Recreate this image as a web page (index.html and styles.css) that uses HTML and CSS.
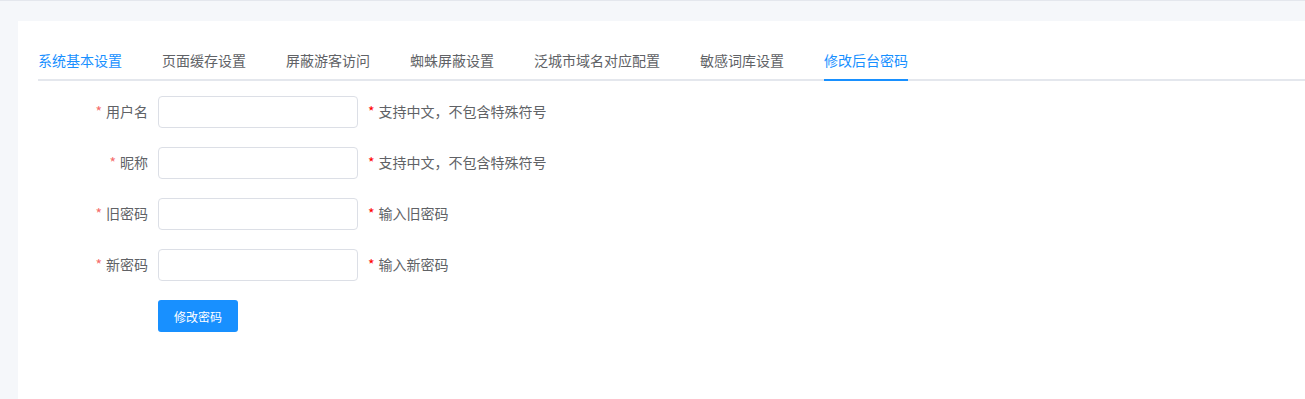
FILE: index.html
```html
<!DOCTYPE html>
<html lang="zh-CN">
<head>
    <meta charset="UTF-8">
    <meta name="viewport" content="width=device-width, initial-scale=1.0">
    <title>修改后台密码</title>
    <link rel="stylesheet" href="styles.css">
</head>
<body>

<div class="page">
    <div class="card">
        <div class="tabs">
            <div class="tab-item hover">系统基本设置</div>
            <div class="tab-item">页面缓存设置</div>
            <div class="tab-item">屏蔽游客访问</div>
            <div class="tab-item">蜘蛛屏蔽设置</div>
            <div class="tab-item">泛城市域名对应配置</div>
            <div class="tab-item">敏感词库设置</div>
            <div class="tab-item active">修改后台密码</div>
        </div>

        <form class="pwd-form">
            <div class="form-row">
                <label class="form-label"><span class="req">*</span>用户名</label>
                <input class="form-input" type="text">
                <span class="form-tip"><span class="tip-req">*</span>支持中文，不包含特殊符号</span>
            </div>
            <div class="form-row">
                <label class="form-label"><span class="req">*</span>昵称</label>
                <input class="form-input" type="text">
                <span class="form-tip"><span class="tip-req">*</span>支持中文，不包含特殊符号</span>
            </div>
            <div class="form-row">
                <label class="form-label"><span class="req">*</span>旧密码</label>
                <input class="form-input" type="password">
                <span class="form-tip"><span class="tip-req">*</span>输入旧密码</span>
            </div>
            <div class="form-row">
                <label class="form-label"><span class="req">*</span>新密码</label>
                <input class="form-input" type="password">
                <span class="form-tip"><span class="tip-req">*</span>输入新密码</span>
            </div>
            <div class="form-row">
                <button class="submit-button" type="button">修改密码</button>
            </div>
        </form>
    </div>
</div>

</body>
</html>
```

FILE: styles.css
```css
body {
    margin: 0;
    padding: 0;
    font-family: "Noto Sans CJK SC", "Liberation Sans", sans-serif;
    background-color: #f5f7fa;
    color: #606266;
    border-top: 1px solid #e4e7ed;
}
.page {
    padding: 20px 0 0 18px;
}
.card {
    background-color: #fff;
    padding: 20px 0 0 20px;
    min-height: calc(100vh - 41px);
}
.tabs {
    display: flex;
    border-bottom: 2px solid #e4e7ed;
}
.tab-item {
    font-size: 14px;
    line-height: 38px;
    margin-right: 40px;
    margin-bottom: -2px;
    border-bottom: 2px solid transparent;
    color: #606266;
    cursor: pointer;
}
.tab-item.hover {
    color: #1890ff;
}
.tab-item.active {
    color: #1890ff;
    border-bottom-color: #1890ff;
}
.pwd-form {
    padding-top: 15px;
}
.form-row {
    display: flex;
    align-items: center;
    height: 32px;
    margin-bottom: 19px;
}
.form-label {
    width: 120px;
    padding-right: 10px;
    box-sizing: border-box;
    text-align: right;
    font-size: 14px;
    color: #606266;
    margin-bottom: 2px; /* 文字を少し上に */
}
.req {
    color: #f56c6c;
    margin-right: 4px;
}
.form-input {
    width: 200px;
    height: 32px;
    box-sizing: border-box;
    border: 1px solid #dcdfe6;
    border-radius: 4px;
    padding: 0 10px;
    outline: none;
    font-size: 14px;
}
.form-tip {
    margin-left: 10px;
    font-size: 14px;
    color: #606266;
    margin-bottom: 2px;
}
.tip-req {
    color: #ff0000;
    margin-right: 4px;
}
.submit-button {
    margin-left: 120px;
    width: 80px;
    height: 32px;
    border: none;
    border-radius: 3px;
    background-color: #1890ff;
    color: #fff;
    font-family: inherit;
    font-size: 12px;
    cursor: pointer;
}
```
